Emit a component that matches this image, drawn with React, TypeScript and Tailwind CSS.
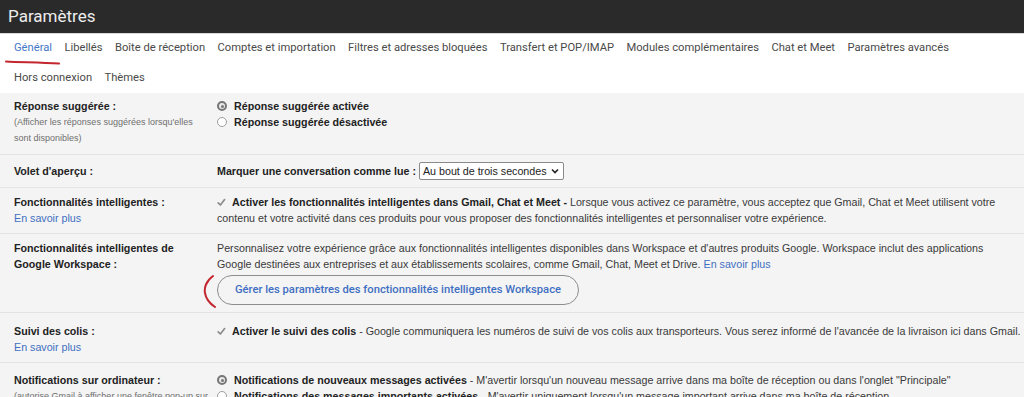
import React from "react";

// Gmail-style settings page, "Général" tab
const TABS_ROW_1 = [
  "Général",
  "Libellés",
  "Boîte de réception",
  "Comptes et importation",
  "Filtres et adresses bloquées",
  "Transfert et POP/IMAP",
  "Modules complémentaires",
  "Chat et Meet",
  "Paramètres avancés",
];
const TABS_ROW_2 = ["Hors connexion", "Thèmes"];

const Radio = ({ checked = false }: { checked?: boolean }) =>
  checked ? (
    <span className="inline-flex h-[10px] w-[10px] shrink-0 items-center justify-center rounded-full border-[2px] border-[#777] bg-[#e9e9e9]">
      <span className="h-[3px] w-[3px] rounded-full bg-[#777]" />
    </span>
  ) : (
    <span className="h-[10px] w-[10px] shrink-0 rounded-full border border-[#a0a0a0] bg-white" />
  );

const Check = () => (
  <svg
    width="9"
    height="9"
    viewBox="0 0 9 9"
    className="mr-[6px] inline-block align-[-1px]"
  >
    <path
      d="M1.2 4.8 L3.4 7 L7.6 1.6"
      fill="none"
      stroke="#8c8c8c"
      strokeWidth="1.7"
      strokeLinecap="round"
      strokeLinejoin="round"
    />
  </svg>
);

const Row = ({
  label,
  children,
  className = "",
}: {
  label: React.ReactNode;
  children: React.ReactNode;
  className?: string;
}) => (
  <div className={`flex border-t border-[#e4e4e4] ${className}`}>
    <div className="w-[203px] shrink-0 pl-[14px]">{label}</div>
    <div className="min-w-0 flex-1 pl-[14px]">{children}</div>
  </div>
);

const Label = ({ children }: { children: React.ReactNode }) => (
  <div className="font-bold text-[#222]">{children}</div>
);

const Link = ({ children }: { children: React.ReactNode }) => (
  <span className="text-[#3f6fc2]">{children}</span>
);

export default function App() {
  return (
    <div className="h-[397px] w-full overflow-hidden bg-[#f4f4f4]">
      {/* title bar */}
      <div className="flex h-[33px] items-center bg-[#2a2a2a] pl-[8px] font-['Roboto',sans-serif] text-[17px] text-[#ececec]">
        Paramètres
      </div>

      {/* tabs */}
      <div className="border-t border-[#d9d9d9] bg-white font-['Roboto',sans-serif] text-[11.2px] text-[#4a4a4a]">
        <div className="relative flex h-[29px] items-center gap-[12.4px] pl-[14px]">
          {TABS_ROW_1.map((t, i) => (
            <span key={t} className={i === 0 ? "text-[#4478c8]" : ""}>
              {t}
            </span>
          ))}
          <svg
            className="absolute left-[5px] top-[26px]"
            width="56"
            height="6"
            viewBox="0 0 56 6"
          >
            <path
              d="M1 1.4 C 15 2.2, 35 2.4, 54 3.6"
              fill="none"
              stroke="#c3262e"
              strokeWidth="2"
              strokeLinecap="round"
            />
          </svg>
        </div>
        <div className="flex h-[30px] items-center gap-[12.4px] pl-[14px]">
          {TABS_ROW_2.map((t) => (
            <span key={t}>{t}</span>
          ))}
        </div>
      </div>

      {/* settings */}
      <div className="font-['Liberation_Sans',Arial,sans-serif] text-[10.7px] leading-[16px] text-[#3a3a3a]">
        <Row
          className="border-t-0 pb-[8px] pt-[5px]"
          label={
            <>
              <Label>Réponse suggérée :</Label>
              <div className="text-[9px] text-[#6f6f6f]">
                (Afficher les réponses suggérées lorsqu'elles sont disponibles)
              </div>
            </>
          }
        >
          <div className="flex items-center gap-[7px] font-bold text-[#222]">
            <Radio checked />
            Réponse suggérée activée
          </div>
          <div className="flex items-center gap-[7px] font-bold text-[#222]">
            <Radio />
            Réponse suggérée désactivée
          </div>
        </Row>

        <Row className="pb-[8px] pt-[8px]" label={<Label>Volet d'aperçu :</Label>}>
          <div className="flex h-[16px] items-center gap-[3px]">
            <span className="font-bold text-[#222]">
              Marquer une conversation comme lue :
            </span>
            <span className="flex h-[18px] items-center gap-[4px] rounded-[2px] border border-[#8a8a8a] bg-white pl-[3px] pr-[4px] text-[#222]">
              Au bout de trois secondes
              <svg width="8" height="6" viewBox="0 0 8 6">
                <path
                  d="M1 1.5 L4 4.5 L7 1.5"
                  fill="none"
                  stroke="#222"
                  strokeWidth="1.6"
                />
              </svg>
            </span>
          </div>
        </Row>

        <Row
          className="pb-[7px] pt-[6px]"
          label={
            <>
              <Label>Fonctionnalités intelligentes :</Label>
              <Link>En savoir plus</Link>
            </>
          }
        >
          <p className="pr-[8px]">
            <Check />
            <span className="font-bold text-[#222]">
              Activer les fonctionnalités intelligentes dans Gmail, Chat et Meet -
            </span>{" "}
            Lorsque vous activez ce paramètre, vous acceptez que Gmail, Chat et
            Meet utilisent votre contenu et votre activité dans ces produits pour
            vous proposer des fonctionnalités intelligentes et personnaliser votre
            expérience.
          </p>
        </Row>

        <Row
          className="pb-[7px] pt-[6px]"
          label={<Label>Fonctionnalités intelligentes de Google Workspace :</Label>}
        >
          <p className="pr-[8px]">
            Personnalisez votre expérience grâce aux fonctionnalités intelligentes
            disponibles dans Workspace et d'autres produits Google. Workspace
            inclut des applications Google destinées aux entreprises et aux
            établissements scolaires, comme Gmail, Chat, Meet et Drive.{" "}
            <Link>En savoir plus</Link>
          </p>
          <div className="relative mt-[3px] w-fit">
            <div className="flex h-[30px] w-[362px] items-center justify-center rounded-full border border-[#8d8d8d] font-['Roboto',sans-serif] text-[11.2px] font-medium text-[#3f6fc2]">
              Gérer les paramètres des fonctionnalités intelligentes Workspace
            </div>
            <svg
              className="absolute -left-[14px] -top-[1px]"
              width="14"
              height="34"
              viewBox="0 0 14 34"
            >
              <path
                d="M10 2 C 3 7, 1 14, 2 19 C 3 25, 6 29, 12 33"
                fill="none"
                stroke="#c3262e"
                strokeWidth="2"
                strokeLinecap="round"
              />
            </svg>
          </div>
        </Row>

        <Row
          className="pb-[7px] pt-[10px]"
          label={
            <>
              <Label>Suivi des colis :</Label>
              <Link>En savoir plus</Link>
            </>
          }
        >
          <p>
            <Check />
            <span className="font-bold text-[#222]">Activer le suivi des colis</span>{" "}
            - Google communiquera les numéros de suivi de vos colis aux
            transporteurs. Vous serez informé de l'avancée de la livraison ici dans
            Gmail.
          </p>
        </Row>

        <Row
          className="pb-[7px] pt-[9px]"
          label={
            <>
              <Label>Notifications sur ordinateur :</Label>
              <div className="whitespace-nowrap text-[9px] text-[#6f6f6f]">
                (autorise Gmail à afficher une fenêtre pop-up sur
              </div>
            </>
          }
        >
          <div className="flex items-center gap-[7px]">
            <Radio checked />
            <span>
              <span className="font-bold text-[#222]">
                Notifications de nouveaux messages activées
              </span>{" "}
              - M'avertir lorsqu'un nouveau message arrive dans ma boîte de
              réception ou dans l'onglet "Principale"
            </span>
          </div>
          <div className="flex items-center gap-[7px]">
            <Radio />
            <span>
              <span className="font-bold text-[#222]">
                Notifications des messages importants activées
              </span>{" "}
              - M'avertir uniquement lorsqu'un message important arrive dans ma
              boîte de réception
            </span>
          </div>
        </Row>
      </div>
    </div>
  );
}
